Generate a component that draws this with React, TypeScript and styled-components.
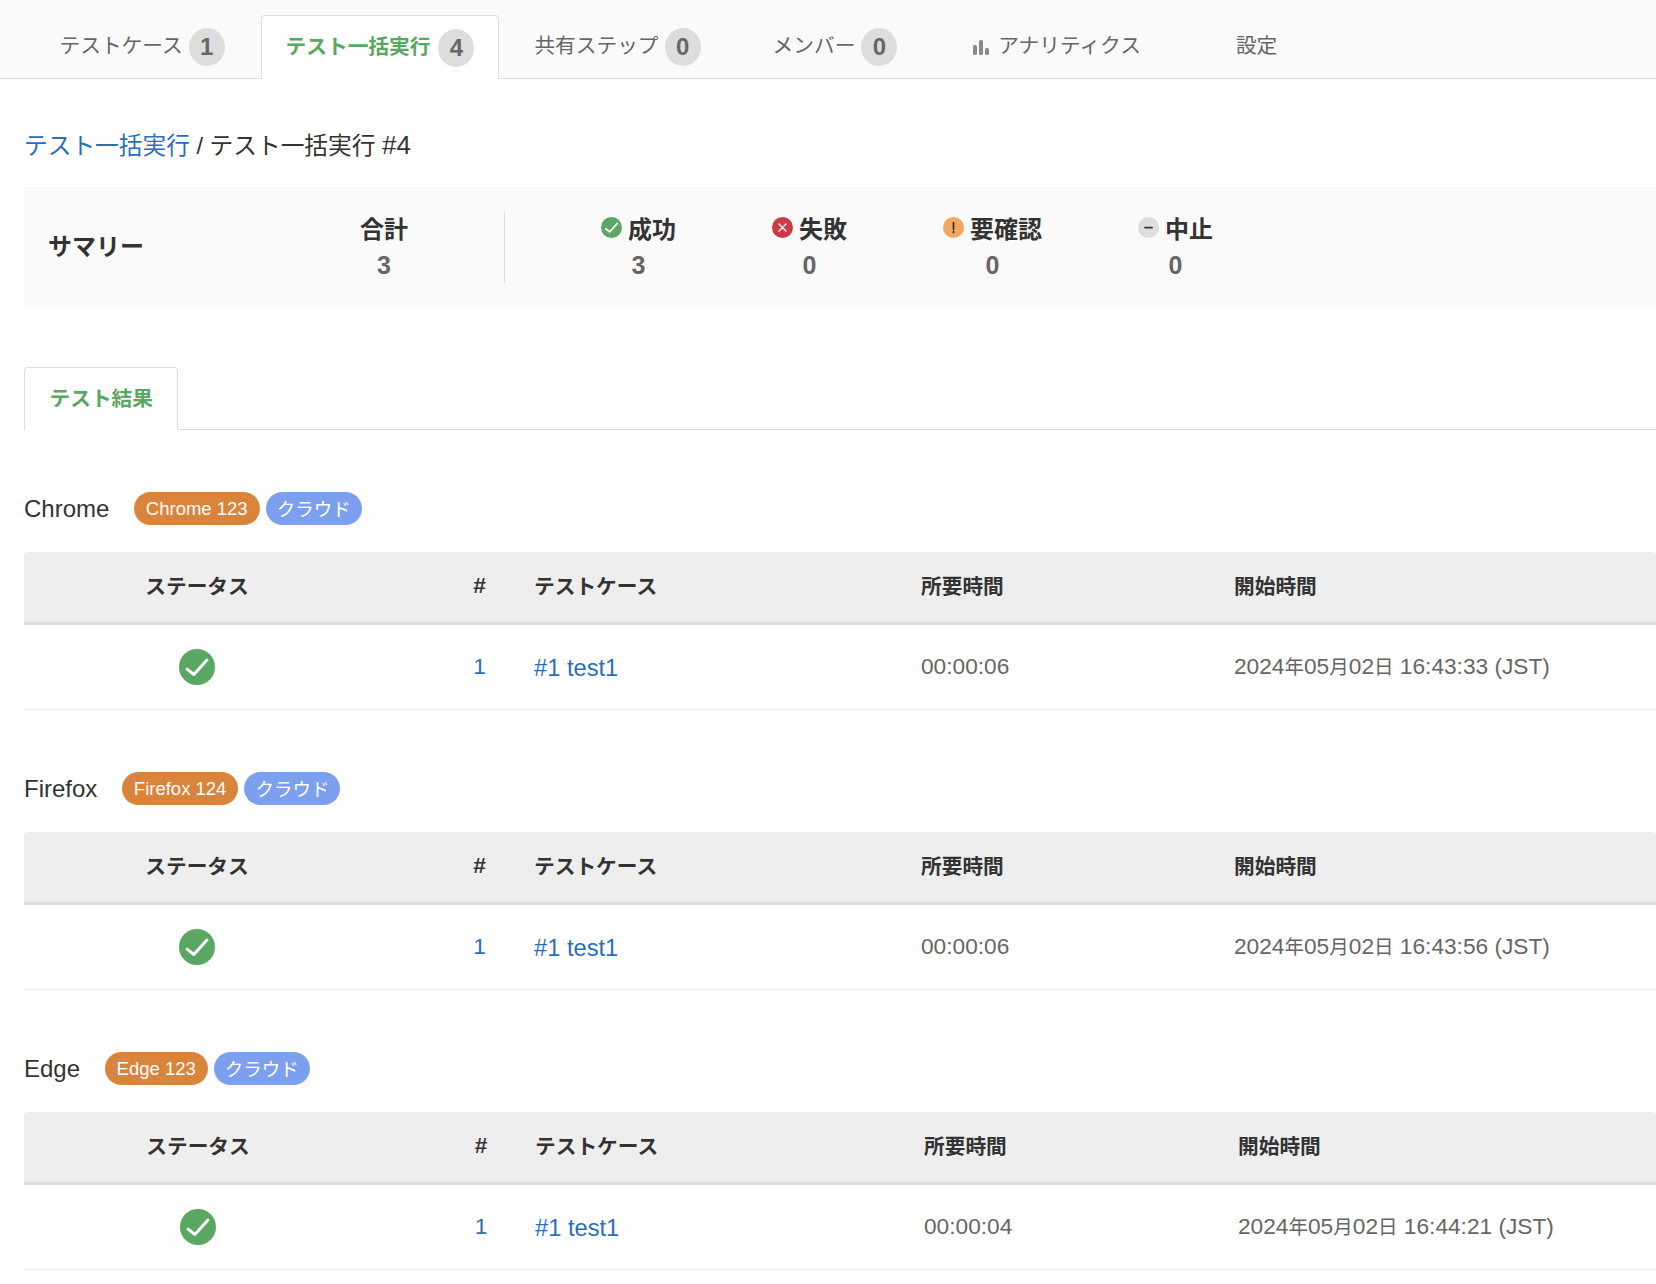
import { createGlobalStyle } from 'styled-components';
import styled from 'styled-components';

const GREEN = '#5aa663';
const LINK = '#2a6ebb';
const TEXT = '#333333';
const MUTED = '#666666';
const LINE = '#dddddd';

const GlobalStyle = createGlobalStyle`
  html, body {
    margin: 0;
    padding: 0;
    background: #ffffff;
    overflow-x: hidden;
  }
  body {
    font-family: "Liberation Sans", "Noto Sans CJK JP", sans-serif;
    color: ${TEXT};
  }
`;

const TabBar = styled.nav`
  display: flex;
  align-items: flex-end;
  height: 63px;
  padding: 15px 0 0 23px;
  background: #fafafa;
  border-bottom: 1px solid ${LINE};
`;

const Tab = styled.a<{ $active?: boolean; $left?: number }>`
  display: flex;
  align-items: center;
  gap: ${(p) => (p.$active ? 8 : 6)}px;
  box-sizing: border-box;
  height: 64px;
  margin-left: ${(p) => p.$left ?? 12}px;
  margin-bottom: -1px;
  padding: ${(p) => (p.$active ? '2px' : '0')} 23.5px 2px;
  font-size: 20.7px;
  line-height: 28px;
  font-weight: ${(p) => (p.$active ? 700 : 400)};
  color: ${(p) => (p.$active ? GREEN : MUTED)};
  background: ${(p) => (p.$active ? '#ffffff' : 'transparent')};
  border: 1px solid ${(p) => (p.$active ? LINE : 'transparent')};
  border-bottom-color: ${(p) => (p.$active ? '#ffffff' : 'transparent')};
  border-radius: 4px 4px 0 0;
`;

const CountBadge = styled.span`
  display: flex;
  align-items: center;
  justify-content: center;
  width: 36px;
  height: 38px;
  margin-top: 2px;
  border-radius: 50%;
  background: ${LINE};
  color: ${MUTED};
  font-size: 24px;
  font-weight: 700;
`;

const Content = styled.main`
  padding-left: 24px;
`;

const Breadcrumb = styled.h2`
  height: 36px;
  margin: 48px 0 24px;
  font-size: 23.7px;
  line-height: 36px;
  font-weight: 400;
  color: ${TEXT};
`;

const CrumbLink = styled.a`
  color: ${LINK};
`;

const CrumbNumber = styled.span`
  font-size: 26px;
`;

const SummaryBox = styled.section`
  display: flex;
  align-items: center;
  gap: 96px;
  height: 120px;
  padding-left: 24px;
  background: #fafafa;
`;

const SummaryTitle = styled.div`
  width: 216px;
  padding-bottom: 6px;
  font-size: 24px;
  font-weight: 700;
`;

const Stat = styled.div`
  display: flex;
  flex-direction: column;
  align-items: center;
`;

const StatLabel = styled.div`
  display: flex;
  align-items: center;
  gap: 6px;
  box-sizing: border-box;
  height: 36px;
  padding-bottom: 4px;
  font-size: 24px;
  font-weight: 700;
  color: ${TEXT};
`;

const StatValue = styled.div`
  height: 36px;
  font-size: 25px;
  line-height: 36px;
  font-weight: 700;
  color: ${MUTED};
`;

const Divider = styled.div`
  width: 1px;
  height: 72px;
  background: ${LINE};
`;

const SubTabBar = styled.div`
  display: flex;
  margin-top: 60px;
  border-bottom: 1px solid ${LINE};
`;

const SubTab = styled.a`
  display: flex;
  align-items: center;
  box-sizing: border-box;
  height: 63px;
  margin-bottom: -1px;
  padding: 0 24.5px 4px;
  font-size: 20.7px;
  font-weight: 700;
  color: ${GREEN};
  background: #ffffff;
  border: 1px solid ${LINE};
  border-bottom-color: #ffffff;
  border-radius: 4px 4px 0 0;
`;

const RunSection = styled.section`
  padding-top: 62px;
`;

const RunHeading = styled.div`
  display: flex;
  align-items: center;
  gap: 6px;
  height: 33px;
  margin-bottom: 27px;
`;

const RunName = styled.h3`
  margin: 0 18.5px 0 0;
  font-size: 24px;
  line-height: 33px;
  font-weight: 400;
  color: ${TEXT};
`;

const Pill = styled.span<{ $tone: 'browser' | 'cloud' }>`
  display: flex;
  align-items: center;
  box-sizing: border-box;
  height: 33px;
  padding: ${(p) => (p.$tone === 'browser' ? '0 12px' : '0 11px 2px')};
  border-radius: 17px;
  font-size: 18.5px;
  color: #ffffff;
  background: ${(p) => (p.$tone === 'browser' ? '#d9833b' : '#7c9fee')};
`;

const Row = styled.div<{ $columns: string }>`
  display: grid;
  grid-template-columns: ${(p) => p.$columns};
  align-items: center;
`;

const HeadRow = styled(Row)`
  height: 66px;
  padding-bottom: 4px;
  background: #eeeeee;
  border-bottom: 3px solid ${LINE};
  border-radius: 4px 4px 0 0;
  font-size: 20.7px;
  font-weight: 700;
  color: ${TEXT};
`;

const BodyRow = styled(Row)`
  height: 82px;
  padding-bottom: 2px;
  border-bottom: 1px solid #eeeeee;
  font-size: 22.7px;
  line-height: 30px;
  color: ${MUTED};
`;

const StatusCell = styled.div<{ $offset?: boolean }>`
  display: flex;
  justify-content: center;
  padding-top: ${(p) => (p.$offset ? 2 : 0)}px;
`;

const NumberCell = styled.div<{ $indent: number }>`
  padding-left: ${(p) => p.$indent}px;
  font-size: 22.7px;
  text-align: center;
`;

const NumberLink = styled.a`
  color: ${LINK};
`;

const CaseCell = styled.div`
  padding-top: 4px;
`;

const CaseLink = styled.a`
  font-size: 23.7px;
  color: ${LINK};
`;

const DateUnit = styled.span`
  font-size: 19.5px;
`;

const GlyphSvg = styled.svg`
  display: block;
  flex: none;
`;

const BarsSvg = styled(GlyphSvg)`
  margin: 3px 3px 0 0;
`;

type StatusKind = 'ok' | 'fail' | 'warn' | 'stop';

const StatusIcon = ({ kind, size }: { kind: StatusKind; size: number }) => {
  const fill = { ok: GREEN, fail: '#c93c46', warn: '#f2a95f', stop: LINE }[kind];
  return (
    <GlyphSvg width={size} height={size} viewBox="0 0 24 24">
      <circle cx="12" cy="12" r="12" fill={fill} />
      {kind === 'ok' && (
        <path d="M5.4 13.4l4.5 3.6 8.7-9.6" fill="none" stroke="#fff" strokeWidth="2" strokeLinecap="round" strokeLinejoin="round" />
      )}
      {kind === 'fail' && (
        <path d="M8 8l8 8M16 8l-8 8" fill="none" stroke="#fff" strokeWidth="1.5" strokeLinecap="round" />
      )}
      {kind === 'warn' && (
        <path d="M12 6.5v7.5M12 16.6v1" fill="none" stroke="#333" strokeWidth="2" strokeLinecap="round" />
      )}
      {kind === 'stop' && <path d="M8 12h8" fill="none" stroke="#333" strokeWidth="2" strokeLinecap="round" />}
    </GlyphSvg>
  );
};

const BarsIcon = () => (
  <BarsSvg width="16" height="15" viewBox="0 0 16 15">
    <rect x="0" y="5" width="4" height="10" rx="1.6" fill="#8a8a8a" />
    <rect x="6" y="0" width="4" height="15" rx="1.6" fill="#8a8a8a" />
    <rect x="12" y="8" width="4" height="7" rx="1.6" fill="#8a8a8a" />
  </BarsSvg>
);

const stats: { kind: StatusKind; label: string; value: number }[] = [
  { kind: 'ok', label: '成功', value: 3 },
  { kind: 'fail', label: '失敗', value: 0 },
  { kind: 'warn', label: '要確認', value: 0 },
  { kind: 'stop', label: '中止', value: 0 },
];

const runs = [
  {
    name: 'Chrome',
    browser: 'Chrome 123',
    columns: '346px 164px 387px 313px 1fr',
    indent: 55,
    duration: '00:00:06',
    time: '16:43:33',
  },
  {
    name: 'Firefox',
    browser: 'Firefox 124',
    columns: '346px 164px 387px 313px 1fr',
    indent: 55,
    duration: '00:00:06',
    time: '16:43:56',
  },
  {
    name: 'Edge',
    browser: 'Edge 123',
    columns: '348px 163px 389px 314px 1fr',
    indent: 55,
    duration: '00:00:04',
    time: '16:44:21',
  },
];

const App = () => {
  return (
    <>
      <GlobalStyle />
      <TabBar>
        <Tab>
          テストケース<CountBadge>1</CountBadge>
        </Tab>
        <Tab $active>
          テスト一括実行<CountBadge>4</CountBadge>
        </Tab>
        <Tab $left={11}>
          共有ステップ<CountBadge>0</CountBadge>
        </Tab>
        <Tab $left={23}>
          メンバー<CountBadge>0</CountBadge>
        </Tab>
        <Tab $left={27}>
          <BarsIcon />
          アナリティクス
        </Tab>
        <Tab $left={46}>設定</Tab>
      </TabBar>
      <Content>
        <Breadcrumb>
          <CrumbLink>テスト一括実行</CrumbLink> / テスト一括実行 <CrumbNumber>#4</CrumbNumber>
        </Breadcrumb>
        <SummaryBox>
          <SummaryTitle>サマリー</SummaryTitle>
          <Stat>
            <StatLabel>合計</StatLabel>
            <StatValue>3</StatValue>
          </Stat>
          <Divider />
          {stats.map((s) => (
            <Stat key={s.label}>
              <StatLabel>
                <StatusIcon kind={s.kind} size={21} />
                {s.label}
              </StatLabel>
              <StatValue>{s.value}</StatValue>
            </Stat>
          ))}
        </SummaryBox>
        <SubTabBar>
          <SubTab>テスト結果</SubTab>
        </SubTabBar>
        {runs.map((run) => (
          <RunSection key={run.name}>
            <RunHeading>
              <RunName>{run.name}</RunName>
              <Pill $tone="browser">{run.browser}</Pill>
              <Pill $tone="cloud">クラウド</Pill>
            </RunHeading>
            <HeadRow $columns={run.columns}>
              <StatusCell>ステータス</StatusCell>
              <NumberCell $indent={run.indent}>#</NumberCell>
              <div>テストケース</div>
              <div>所要時間</div>
              <div>開始時間</div>
            </HeadRow>
            <BodyRow $columns={run.columns}>
              <StatusCell $offset>
                <StatusIcon kind="ok" size={36} />
              </StatusCell>
              <NumberCell $indent={run.indent}>
                <NumberLink>1</NumberLink>
              </NumberCell>
              <CaseCell>
                <CaseLink>#1 test1</CaseLink>
              </CaseCell>
              <div>{run.duration}</div>
              <div>
                2024<DateUnit>年</DateUnit>05<DateUnit>月</DateUnit>02<DateUnit>日</DateUnit> {run.time} (JST)
              </div>
            </BodyRow>
          </RunSection>
        ))}
      </Content>
    </>
  );
};

export default App;
